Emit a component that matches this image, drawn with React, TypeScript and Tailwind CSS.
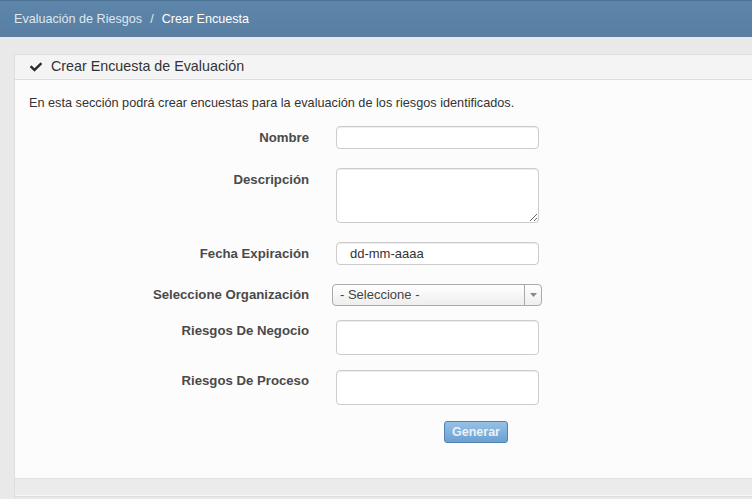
import { FaCheck } from "react-icons/fa";

function Row({ label, top, children, mt }: { label: string; top: string; children: React.ReactNode; mt: string }) {
  return (
    <div className={`flex items-start ${mt}`}>
      <label className={`w-[280px] shrink-0 text-right text-[13.2px] font-bold leading-[16px] text-[#4a4a4a] ${top}`}>{label}</label>
      <div className="ml-[27px]">{children}</div>
    </div>
  );
}

const inputCls =
  "block w-[203px] rounded-[4px] border border-[#cccccc] bg-white shadow-[inset_0_1px_1px_rgba(0,0,0,0.075)] outline-none";

export default function App() {
  return (
    <div className="h-[499px] w-[752px] overflow-hidden bg-[#e9e9e9] font-['Liberation_Sans',Arial,sans-serif] text-[#333]">
      <div className="flex h-[37px] items-center border-t border-[#4d7394] bg-gradient-to-b from-[#5d86aa] to-[#587fa3] px-[14px] text-[12.6px]">
        <span className="text-[#dfe7ee]">Evaluación de Riesgos</span>
        <span className="mx-[8px] text-[#dfe7ee]">/</span>
        <span className="text-white">Crear Encuesta</span>
      </div>

      <div className="ml-[14px] mt-[17px] flex h-[443px] flex-col border border-r-0 border-[#dedede] bg-[#ebebeb]">
        <div className="flex h-[25px] items-center border-b border-[#dddddd] bg-[#f4f4f4] pl-[15px] text-[14.3px] text-[#333]">
          <FaCheck className="h-[12px] w-[12px] text-[#2b2b2b]" />
          <span className="ml-[9px]">Crear Encuesta de Evaluación</span>
        </div>
        <div className="h-[399px] border-b border-[#e0e0e0] bg-[#fcfcfc] px-[14px] pt-[15px]">
          <p className="text-[12.7px] leading-[16px] text-[#333]">
            En esta sección podrá crear encuestas para la evaluación de los riesgos identificados.
          </p>

          <Row label="Nombre" top="pt-[4px]" mt="mt-[15px]">
            <input className={`${inputCls} h-[23px]`} />
          </Row>

          <Row label="Descripción" top="pt-[4px]" mt="mt-[19px]">
            <textarea className={`${inputCls} h-[55px] resize`} />
          </Row>

          <Row label="Fecha Expiración" top="pt-[4px]" mt="mt-[19px]">
            <div className={`${inputCls} flex h-[23px] items-center pl-[13px] text-[13px] text-[#333]`}>dd-mm-aaaa</div>
          </Row>

          <Row label="Seleccione Organización" top="pt-[3px]" mt="mt-[19px]">
            <div className="-ml-[4px] flex h-[22px] w-[210px] items-center rounded-[4px] border border-[#aaaaaa] bg-gradient-to-b from-white to-[#eeeeee] text-[13px] text-[#444]">
              <span className="flex-1 pl-[7px]">- Seleccione -</span>
              <div className="flex h-full w-[17px] items-center justify-center border-l border-[#aaaaaa]">
                <svg width="7" height="4" viewBox="0 0 7 4">
                  <path d="M0 0h7L3.5 4z" fill="#888" />
                </svg>
              </div>
            </div>
          </Row>

          <Row label="Riesgos De Negocio" top="pt-[3px]" mt="mt-[14px]">
            <div className={`${inputCls} h-[35px]`} />
          </Row>

          <Row label="Riesgos De Proceso" top="pt-[3px]" mt="mt-[15px]">
            <div className={`${inputCls} h-[35px]`} />
          </Row>

          <div className="mt-[14px] pl-[415px]">
            <button className="h-[22px] w-[64px] rounded-[3px] border border-[#5383b0] bg-gradient-to-b from-[#97c1e5] to-[#6aa0d1] text-[12.5px] font-bold text-[#e9f1f9]">
              Generar
            </button>
          </div>
        </div>
        <div className="flex-1 border-b border-[#f7f7f7]" />
      </div>
    </div>
  );
}
